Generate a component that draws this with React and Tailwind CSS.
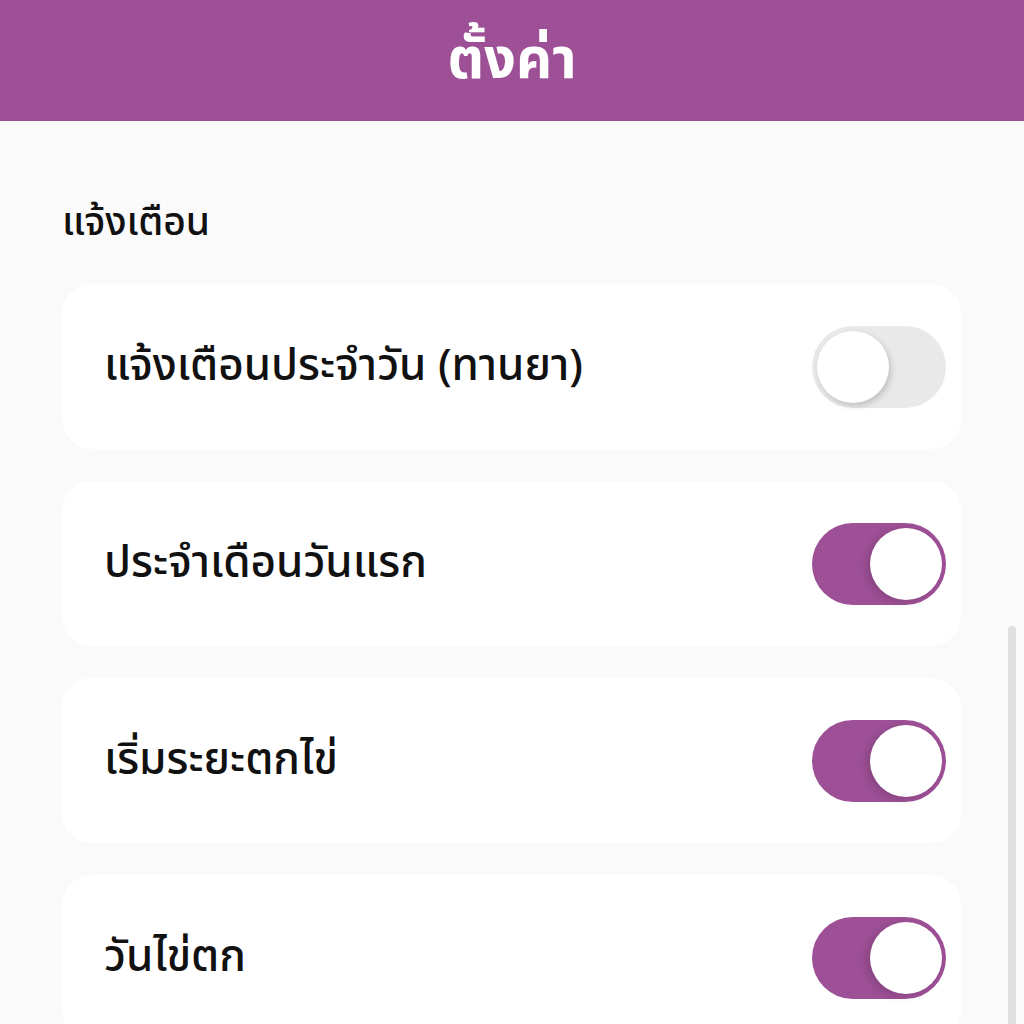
import React, { useState } from 'react';

const thai = { fontFamily: '"Noto Sans Thai", "Noto Sans Thai UI", "Noto Sans", "DejaVu Sans", sans-serif' };

// iOS-like switch used in each settings row
function Toggle({ on, onChange }) {
  return (
    <button
      onClick={onChange}
      className={`relative w-[134px] h-[82px] rounded-full shrink-0 transition-colors ${
        on ? 'bg-[#9e5096]' : 'bg-[#e9e9e9]'
      }`}
    >
      <span
        className={`absolute top-[5px] w-[72px] h-[72px] rounded-full bg-white transition-all ${
          on ? 'left-[58px] shadow-[-4px_2px_8px_rgba(0,0,0,0.15)]' : 'left-[5px] shadow-[2px_3px_6px_rgba(0,0,0,0.18)]'
        }`}
      />
    </button>
  );
}

function SettingRow({ label, on, onChange }) {
  return (
    <div className="bg-white rounded-[30px] h-[165px] pl-[42px] pr-[15px] flex items-center justify-between">
      <span className="text-[44px] font-medium text-[#111] leading-none" style={thai}>{label}</span>
      <Toggle on={on} onChange={onChange} />
    </div>
  );
}

export default function App() {
  const [items, setItems] = useState([
    { label: 'แจ้งเตือนประจำวัน (ทานยา)', on: false },
    { label: 'ประจำเดือนวันแรก', on: true },
    { label: 'เริ่มระยะตกไข่', on: true },
    { label: 'วันไข่ตก', on: true },
  ]);

  const flip = (i) => setItems(items.map((it, j) => (j === i ? { ...it, on: !it.on } : it)));

  return (
    <div className="w-[1024px] h-[1024px] overflow-hidden bg-[#fafafa] relative">
      <header className="h-[121px] bg-[#9e5096] flex items-center justify-center">
        <h1 className="text-white text-[56px] font-bold leading-none" style={thai}>ตั้งค่า</h1>
      </header>

      <main className="pl-[62px] pr-[63px] pt-[81px]">
        <h2 className="text-[39px] font-medium text-[#111] h-[44px] leading-[44px] mb-[38px]" style={thai}>แจ้งเตือน</h2>
        <div className="flex flex-col gap-[32px]">
          {items.map((it, i) => (
            <SettingRow key={i} label={it.label} on={it.on} onChange={() => flip(i)} />
          ))}
        </div>
      </main>

      {/* scrollbar thumb */}
      <div className="absolute right-[8px] top-[626px] w-[8px] h-[420px] rounded-full bg-[#e0e0e0]" />
    </div>
  );
}
